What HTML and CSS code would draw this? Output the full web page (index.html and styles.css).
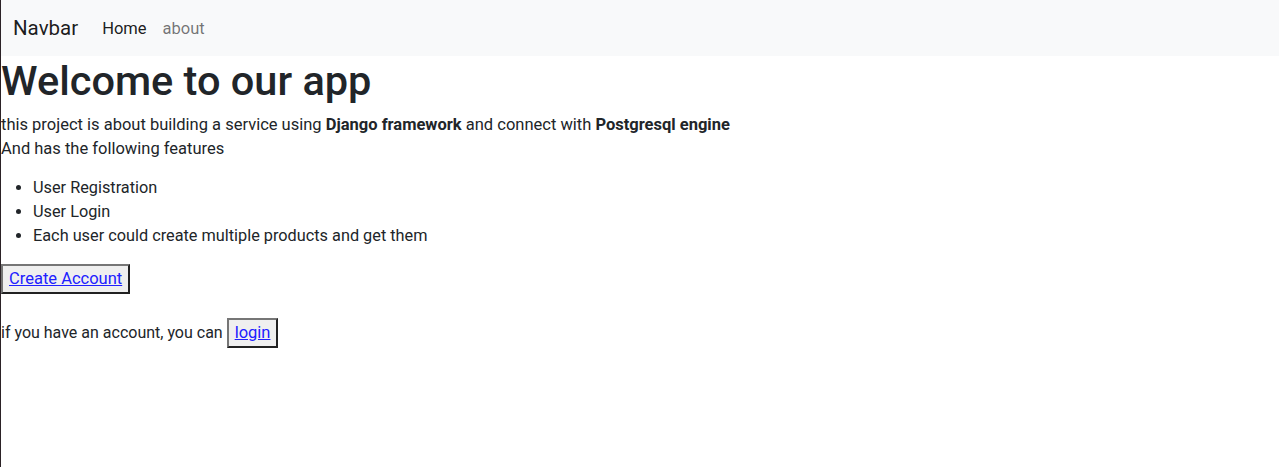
FILE: index.html
```html
<!DOCTYPE html>
<html lang="en">
<head>
<meta charset="utf-8">
<title>Welcome</title>
<link rel="stylesheet" href="styles.css">
</head>
<body>
<nav class="navbar">
  <div class="navbar-inner">
    <a class="brand" href="#">Navbar</a>
    <ul class="nav-links">
      <li><a class="nav-link active" href="#">Home</a></li>
      <li><a class="nav-link" href="#">about</a></li>
    </ul>
  </div>
</nav>
<h1 class="title">Welcome to our app</h1>
<p class="intro">this project is about building a service using <b>Django framework</b> and connect with <b>Postgresql engine</b><br>And has the following features</p>
<ul class="features">
  <li>User Registration</li>
  <li>User Login</li>
  <li>Each user could create multiple products and get them</li>
</ul>
<div class="actions"><button class="btn"><a href="#">Create Account</a></button></div>
<p class="login-line">if you have an account, you can <button class="btn"><a href="#">login</a></button></p>
</body>
</html>
```
FILE: styles.css
```css
* { box-sizing: border-box; }
body {
  margin: 0;
  border-left: 1px solid #2b2226;
  min-height: 467px;
  font-family: Roboto, "Noto Sans", sans-serif;
  font-size: 16.5px;
  line-height: 24px;
  color: #212529;
  background: #fff;
}
.navbar {
  background: #f8f9fa;
  padding: 8px 0;
}
.navbar-inner {
  display: flex;
  align-items: center;
  padding: 0 12px;
}
.brand {
  font-size: 20.5px;
  line-height: 30px;
  padding: 5px 0;
  margin-right: 16px;
  color: rgba(0,0,0,.9);
  text-decoration: none;
}
.nav-links {
  display: flex;
  list-style: none;
  margin: 0;
  padding: 0;
}
.nav-link {
  display: block;
  padding: 9px 8px 7px;
  color: rgba(0,0,0,.55);
  text-decoration: none;
}
.nav-link.active { color: rgba(0,0,0,.9); }
.title {
  margin: 0 0 8px;
  padding-top: 1px;
  height: 48px;
  font-size: 41.5px;
  font-weight: 500;
  line-height: 48px;
}
.intro { margin: 0 0 16px; padding-top: 1px; height: 48px; }
.intro b { font-weight: 700; }
.features {
  margin: 0 0 16px;
  padding-left: 32px;
  font-size: 16.3px;
}
.btn {
  font-family: inherit;
  font-size: 16.5px;
  margin: 0;
  padding: 1px 6px;
  height: 30px;
  border: 2px outset #767676;
  border-radius: 0;
  background: #efefef;
  line-height: 24px;
}
.btn a { color: #2020ff; }
.login-line { margin: 24px 0 0; font-size: 16px; }
```
